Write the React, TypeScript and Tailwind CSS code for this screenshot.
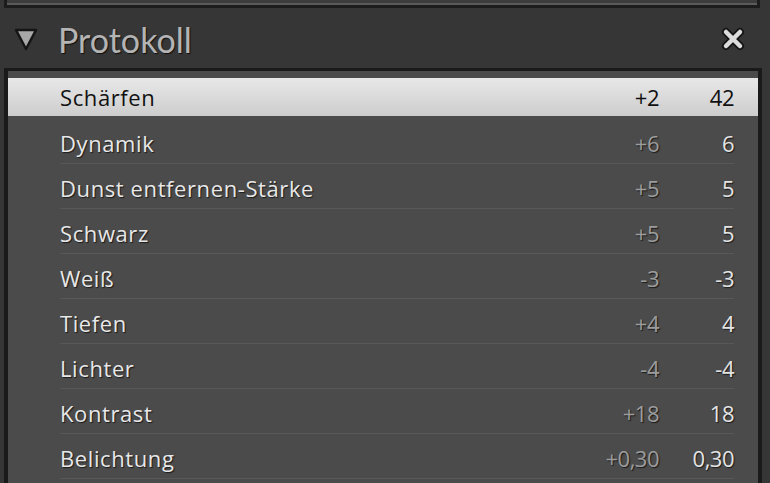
import React from 'react';

type Step = { name: string; delta: string; value: string };

const steps: Step[] = [
  { name: 'Dynamik', delta: '+6', value: '6' },
  { name: 'Dunst entfernen-Stärke', delta: '+5', value: '5' },
  { name: 'Schwarz', delta: '+5', value: '5' },
  { name: 'Weiß', delta: '-3', value: '-3' },
  { name: 'Tiefen', delta: '+4', value: '4' },
  { name: 'Lichter', delta: '-4', value: '-4' },
  { name: 'Kontrast', delta: '+18', value: '18' },
  { name: 'Belichtung', delta: '+0,30', value: '0,30' }
];

function HistoryRow({ step }: { step: Step }) {
  return (
    <div className="h-[45px] pl-[52px] pr-[24px]">
      <div className="h-full flex items-center pt-[5px] border-b border-[#585858] [text-shadow:1px_1px_1px_#1a1a1a]">
        <span className="flex-1 text-[#e8e8e8]">{step.name}</span>
        <span className="w-[80px] text-right text-[#9c9c9c] tracking-[-0.5px]">{step.delta}</span>
        <span className="w-[75px] text-right text-[#e4e4e4] tracking-[-0.5px]">{step.value}</span>
      </div>
    </div>
  );
}

export default function App() {
  return (
    <div
      className="w-[770px] h-[483px] overflow-hidden bg-[#363636] flex flex-col"
      style={{ fontFamily: '"Open Sans", Lato, sans-serif' }}
    >
      {/* bottom edge of the panel above */}
      <div className="h-[10px] pl-[4px] pr-[10px]">
        <div className="h-[8px] border-x-[3px] border-b-[3px] border-[#1c1c1c] bg-[#3c3c3c] shadow-[inset_0_-2px_0_#5a5a5a]" />
      </div>

      <header className="h-[58px] flex items-center pl-[14px] pr-[25px]">
        <svg width="24" height="26" viewBox="0 0 24 26" className="mr-[20px]">
          <path d="M2 4 L22 4 L12 23 Z" fill="#a8a8a8" stroke="#151515" strokeWidth="2.5" strokeLinejoin="round" />
        </svg>
        <h2
          className="flex-1 text-[34px] text-[#b4b4b4] [text-shadow:1px_1px_1px_#111]"
          style={{ fontFamily: 'Lato, sans-serif' }}
        >
          Protokoll
        </h2>
        <svg width="24" height="24" viewBox="0 0 24 24">
          <path d="M5 5 L19 19 M19 5 L5 19" stroke="#151515" strokeWidth="8" strokeLinecap="round" />
          <path d="M5 5 L19 19 M19 5 L5 19" stroke="#dcdcdc" strokeWidth="4.5" strokeLinecap="round" />
        </svg>
      </header>

      <div className="flex-1 ml-[4px] mr-[8px] border-l-[4px] border-r-[4px] border-t-[3px] border-[#1a1a1a] bg-[#4b4b4b] text-[22px] font-medium tracking-[0.6px] pt-[7px]">
        <div className="h-[38px] pl-[52px] pr-[24px] flex items-center bg-gradient-to-b from-[#e8e8e8] to-[#cdcdcd] text-[#111] mb-[3px]">
          <span className="flex-1">Schärfen</span>
          <span className="w-[80px] text-right tracking-[-0.5px]">+2</span>
          <span className="w-[75px] text-right tracking-[-0.5px]">42</span>
        </div>
        {steps.map(s => (
          <HistoryRow key={s.name} step={s} />
        ))}
      </div>
    </div>
  );
}
